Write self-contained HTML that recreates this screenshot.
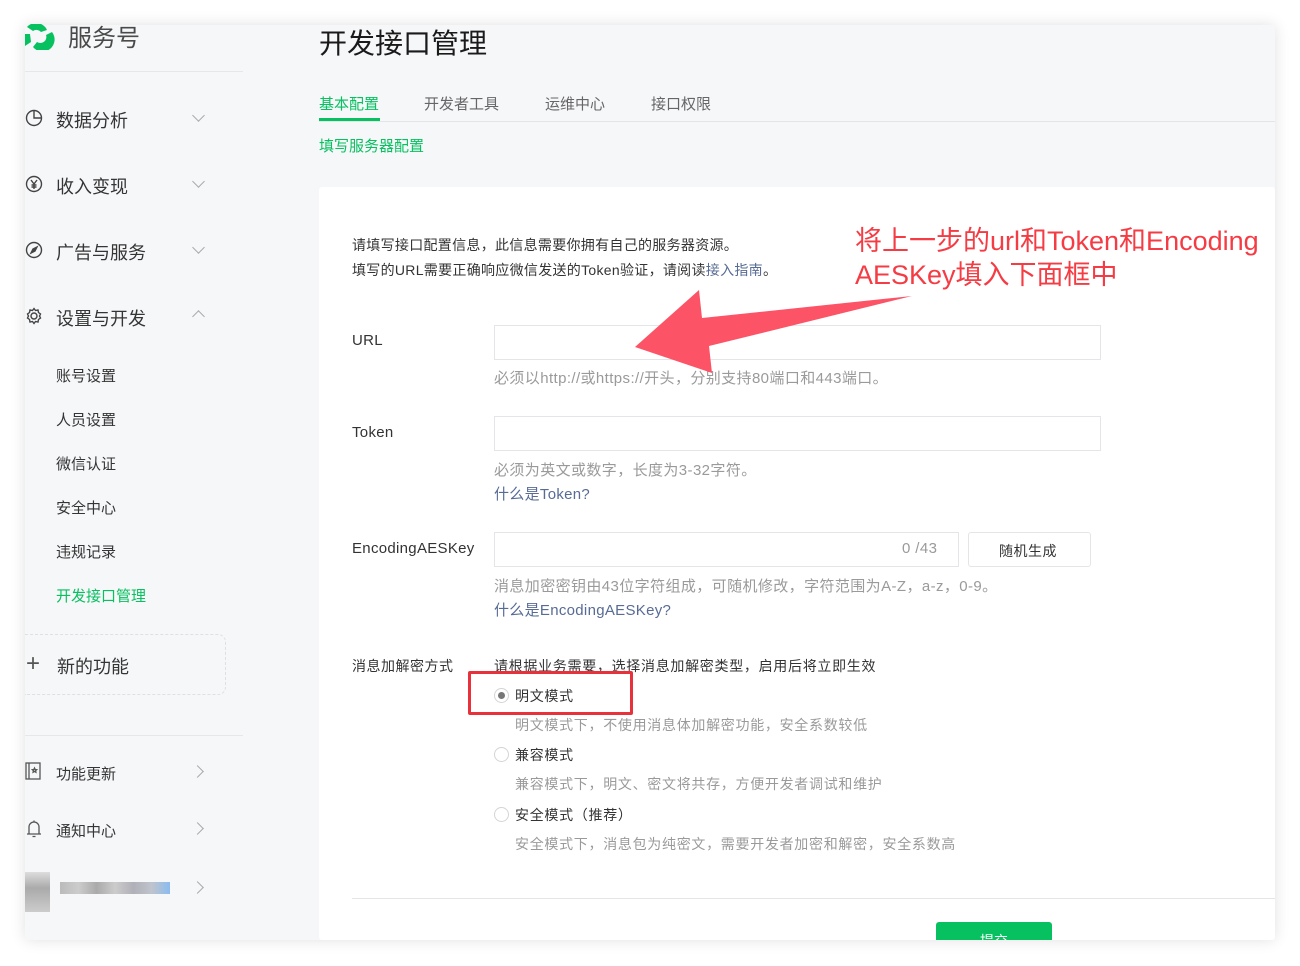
<!DOCTYPE html>
<html><head><meta charset="utf-8"><style>
*{margin:0;padding:0;box-sizing:border-box}
body{width:1300px;height:966px;background:#fff;position:relative;overflow:hidden;font-family:"Liberation Sans","Noto Sans CJK SC",sans-serif;color:#333}
.a{position:absolute;white-space:nowrap}
#frame{position:absolute;left:25px;top:25px;width:1250px;height:915px;background:#f6f7f9;box-shadow:0 0 14px rgba(0,0,0,.12);overflow:hidden}
.nav{font-size:18px;color:#353535}
.sub{font-size:15px;color:#353535}
.chev{position:absolute;width:9px;height:9px;border-right:1.5px solid #aaa;border-bottom:1.5px solid #aaa}
.inp{position:absolute;background:#fff;border:1px solid #e4e5e8}
.hint{font-size:15px;color:#9a9a9a;letter-spacing:.4px}
.lbl{font-size:15px;color:#333;letter-spacing:.3px}
.link{font-size:15px;color:#576b95;letter-spacing:.3px}
.radio{position:absolute;width:15px;height:15px;border:1px solid #d4d4d4;border-radius:50%;background:#fff}
.rd{font-size:14px;letter-spacing:.7px}
</style></head><body>
<div id="frame"></div>
<!-- sidebar -->
<svg class="a" style="left:25px;top:24px" width="30" height="26" viewBox="0 0 30 26"><path d="M2 3 A12 12 0 0 1 22 6 L16 8 A6 6 0 0 0 8 7 Z" fill="#07c160"/><path d="M27 8 A12 12 0 0 1 8 23 L12 18 A6 6 0 0 0 21 11 Z" fill="#07c160"/><path d="M0 10 L5 10 L6 18 L0 22Z" fill="#07c160"/></svg>
<div class="a" style="left:68px;top:18px;font-size:24px;color:#4a4a4a">服务号</div>
<div class="a" style="left:25px;top:71px;width:218px;height:1px;background:#e7e7e9"></div>

<svg class="a" style="left:25px;top:109px" width="18" height="18" viewBox="0 0 18 18" fill="none" stroke="#444" stroke-width="1.4"><circle cx="9" cy="9" r="7.5"/><path d="M9 1.5V9H16.5"/></svg>
<div class="a nav" style="left:56px;top:107px">数据分析</div><div class="chev" style="left:194px;top:111px;transform:rotate(45deg)"></div>
<svg class="a" style="left:25px;top:175px" width="18" height="18" viewBox="0 0 18 18" fill="none" stroke="#444" stroke-width="1.4"><circle cx="9" cy="9" r="7.5"/><path d="M6 5l3 4 3-4M9 9v5M6.5 10h5M6.5 12h5"/></svg>
<div class="a nav" style="left:56px;top:173px">收入变现</div><div class="chev" style="left:194px;top:177px;transform:rotate(45deg)"></div>
<svg class="a" style="left:25px;top:241px" width="18" height="18" viewBox="0 0 18 18" fill="none" stroke="#444" stroke-width="1.4"><circle cx="9" cy="9" r="7.5"/><path d="M12 6L8 8 6 12 10 10Z" fill="#444"/></svg>
<div class="a nav" style="left:56px;top:239px">广告与服务</div><div class="chev" style="left:194px;top:243px;transform:rotate(45deg)"></div>
<svg class="a" style="left:25px;top:307px" width="18" height="18" viewBox="0 0 18 18" fill="none" stroke="#444" stroke-width="1.4"><circle cx="9" cy="9" r="3"/><path d="M9 1.5l1.5 2 2.5-.5.5 2.5 2 1.5-1 2 1 2-2 1.5-.5 2.5-2.5-.5L9 16.5l-1.5-2-2.5.5-.5-2.5-2-1.5 1-2-1-2 2-1.5.5-2.5 2.5.5Z"/></svg>
<div class="a nav" style="left:56px;top:305px">设置与开发</div><div class="chev" style="left:194px;top:312px;transform:rotate(225deg)"></div>

<div class="a sub" style="left:56px;top:365px">账号设置</div>
<div class="a sub" style="left:56px;top:409px">人员设置</div>
<div class="a sub" style="left:56px;top:453px">微信认证</div>
<div class="a sub" style="left:56px;top:497px">安全中心</div>
<div class="a sub" style="left:56px;top:541px">违规记录</div>
<div class="a sub" style="left:56px;top:585px;color:#07c160">开发接口管理</div>

<div class="a" style="left:25px;top:634px;width:201px;height:61px;border:1px dashed #e0e0e3;border-left:none;border-radius:0 8px 8px 0"></div>
<div class="a" style="left:26px;top:652px;font-size:24px;color:#555;line-height:24px">+</div>
<div class="a nav" style="left:57px;top:653px">新的功能</div>
<div class="a" style="left:25px;top:735px;width:218px;height:1px;background:#e7e7e9"></div>

<svg class="a" style="left:25px;top:762px" width="17" height="18" viewBox="0 0 17 18" fill="none" stroke="#555" stroke-width="1.3"><rect x="1" y="1" width="14" height="16"/><path d="M4 1v16"/><path d="M9.5 6l.7 1.5 1.5.2-1.1 1 .3 1.5-1.4-.8-1.4.8.3-1.5-1.1-1 1.5-.2Z"/></svg>
<div class="a sub" style="left:56px;top:763px">功能更新</div><div class="chev" style="left:193px;top:767px;transform:rotate(-45deg)"></div>
<svg class="a" style="left:25px;top:819px" width="18" height="19" viewBox="0 0 18 19" fill="none" stroke="#555" stroke-width="1.3"><path d="M2 15h14M4 15V8a5 5 0 0 1 10 0v7M7.5 17.5h3M9 1.5v1.5"/></svg>
<div class="a sub" style="left:56px;top:820px">通知中心</div><div class="chev" style="left:193px;top:824px;transform:rotate(-45deg)"></div>
<div class="a" style="left:25px;top:872px;width:25px;height:40px;background:linear-gradient(#ddd,#aaa 40%,#ccc)"></div>
<div class="a" style="left:60px;top:882px;width:110px;height:12px;background:linear-gradient(90deg,#bbb,#ccc,#aaa,#ccc,#b0b0b8,#c0c4cc,#8bbcf0)"></div>
<div class="chev" style="left:193px;top:883px;transform:rotate(-45deg)"></div>

<!-- main -->
<div class="a" style="left:319px;top:22px;font-size:28px;color:#1a1a1a">开发接口管理</div>
<div class="a" style="left:319px;top:93px;font-size:15px;color:#07c160">基本配置</div>
<div class="a" style="left:319px;top:118px;width:61px;height:3px;background:#07c160"></div>
<div class="a" style="left:424px;top:93px;font-size:15px;color:#666">开发者工具</div>
<div class="a" style="left:545px;top:93px;font-size:15px;color:#666">运维中心</div>
<div class="a" style="left:651px;top:93px;font-size:15px;color:#666">接口权限</div>
<div class="a" style="left:319px;top:121px;width:956px;height:1px;background:#e3e4e6"></div>
<div class="a" style="left:319px;top:135px;font-size:15px;color:#07c160">填写服务器配置</div>

<div class="a" style="left:319px;top:187px;width:956px;height:753px;background:#fff;border-radius:3px"></div>
<div class="a" style="left:352px;top:233px;font-size:14px;color:#333;line-height:25px;letter-spacing:.3px">请填写接口配置信息，此信息需要你拥有自己的服务器资源。<br>填写的URL需要正确响应微信发送的Token验证，请阅读<span style="color:#576b95">接入指南</span>。</div>

<div class="a lbl" style="left:352px;top:332px">URL</div>
<div class="inp" style="left:494px;top:325px;width:607px;height:35px"></div>
<div class="a hint" style="left:494px;top:367px">必须以http://或https://开头，分别支持80端口和443端口。</div>

<div class="a lbl" style="left:352px;top:424px">Token</div>
<div class="inp" style="left:494px;top:416px;width:607px;height:35px"></div>
<div class="a hint" style="left:494px;top:459px">必须为英文或数字，长度为3-32字符。</div>
<div class="a link" style="left:494px;top:483px">什么是Token?</div>

<div class="a lbl" style="left:352px;top:540px">EncodingAESKey</div>
<div class="inp" style="left:494px;top:532px;width:465px;height:35px"></div>
<div class="a hint" style="left:902px;top:540px">0 /43</div>
<div class="inp" style="left:968px;top:532px;width:123px;height:35px;border-radius:3px"></div>
<div class="a" style="left:999px;top:541px;font-size:14px;color:#333;letter-spacing:.5px">随机生成</div>
<div class="a hint" style="left:494px;top:575px">消息加密密钥由43位字符组成，可随机修改，字符范围为A-Z，a-z，0-9。</div>
<div class="a link" style="left:494px;top:599px">什么是EncodingAESKey?</div>

<div class="a rd" style="left:352px;top:656px;color:#333;letter-spacing:.5px">消息加解密方式</div>
<div class="a rd" style="left:494px;top:656px;color:#333">请根据业务需要，选择消息加解密类型，启用后将立即生效</div>
<div class="radio" style="left:494px;top:688px"><div style="position:absolute;left:3px;top:3px;width:7px;height:7px;border-radius:50%;background:#777"></div></div>
<div class="a rd" style="left:515px;top:686px;color:#333">明文模式</div>
<div class="a" style="left:468px;top:671px;width:165px;height:44px;border:3px solid #e8313a;border-radius:2px"></div>
<div class="a hint rd" style="left:515px;top:715px">明文模式下，不使用消息体加解密功能，安全系数较低</div>
<div class="radio" style="left:494px;top:747px"></div>
<div class="a rd" style="left:515px;top:745px;color:#333">兼容模式</div>
<div class="a hint rd" style="left:515px;top:774px">兼容模式下，明文、密文将共存，方便开发者调试和维护</div>
<div class="radio" style="left:494px;top:807px"></div>
<div class="a rd" style="left:515px;top:805px;color:#333">安全模式（推荐）</div>
<div class="a hint rd" style="left:515px;top:834px">安全模式下，消息包为纯密文，需要开发者加密和解密，安全系数高</div>
<div class="a" style="left:352px;top:898px;width:923px;height:1px;background:#e5e5e5"></div>
<div class="a" style="left:936px;top:922px;width:116px;height:18px;background:#07c160;border-radius:3px 3px 0 0;overflow:hidden"><div style="color:#fff;font-size:14px;text-align:center;padding-top:9px">提交</div></div>

<!-- annotation -->
<svg class="a" style="left:0;top:0" width="1300" height="966"><polygon points="635,347 699,290 702,318 912,296 709,346 712,373" fill="#fc5366"/></svg>
<div class="a" style="left:855px;top:224px;font-size:27px;color:#f53b43;line-height:34px">将上一步的url和Token和Encoding<br>AESKey填入下面框中</div>
</body></html>
